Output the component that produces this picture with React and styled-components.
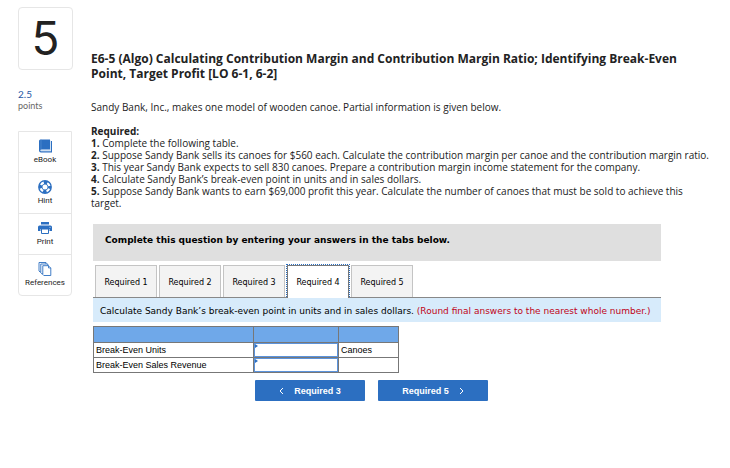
import { useState } from 'react';
import styled, { createGlobalStyle } from 'styled-components';

const GlobalStyle = createGlobalStyle`
  * {
    box-sizing: border-box;
  }
  body {
    margin: 0;
    background: #fff;
    color: #222;
    font-family: 'Open Sans', sans-serif;
  }
`;

const Page = styled.div`
  display: flex;
  align-items: flex-start;
  gap: 18px;
  padding: 7px 18px;
`;

const Sidebar = styled.aside`
  flex: none;
  width: 55px;
`;

const QuestionNumber = styled.div`
  height: 63px;
  border: 1px solid #e6e6e6;
  border-radius: 4px;
  font-family: Inter, sans-serif;
  font-size: 46px;
  font-weight: 400;
  line-height: 60px;
  text-align: center;
`;

const Points = styled.div`
  margin-top: 18px;
  font-family: Lato, sans-serif;
  font-size: 9px;
  line-height: 11px;
  color: #666;
`;

const PointsValue = styled.div`
  font-size: 10px;
  line-height: 12px;
  color: #1f57a4;
`;

const Tools = styled.nav`
  width: 54px;
  margin-top: 20px;
  border: 1px solid #e6e6e6;
  border-radius: 0 0 4px 4px;
`;

const Tool = styled.a`
  display: flex;
  flex-direction: column;
  align-items: center;
  gap: 2px;
  height: 41px;
  padding-top: 7px;
  font-family: Roboto, sans-serif;
  font-size: 8px;
  line-height: 10px;
  color: #222;
  text-decoration: none;

  &:first-child {
    height: 40px;
  }

  & + & {
    border-top: 1px solid #e6e6e6;
  }
`;

const Main = styled.main`
  flex: 1;
  min-width: 0;
  padding-top: 44px;
`;

const Title = styled.h1`
  max-width: 610px;
  margin: 0 0 20px;
  font-size: 12px;
  font-weight: 700;
  line-height: 15px;
`;

const Intro = styled.p`
  margin: 0 0 12px;
  font-size: 10px;
  line-height: 12px;
`;

const Steps = styled.div`
  font-size: 10px;
  line-height: 12px;
`;

const Worksheet = styled.section`
  max-width: 568px;
  margin: 15px 0 0 2px;
  font-family: Verdana, 'DejaVu Sans', sans-serif;
  font-size: 9px;
  line-height: 12px;
  color: #000;
`;

const Banner = styled.div`
  padding: 10px 12px 15px;
  background: #dfdfdf;
  font-weight: 700;
`;

const TabList = styled.div`
  display: flex;
  gap: 2px;
  padding: 4px 2px 0;
  border-bottom: 1px solid #888;
`;

const Tab = styled.button`
  width: 62px;
  height: 32px;
  padding: 2px 0 0;
  border: 1px solid #c4c4c4;
  border-bottom: 0;
  background: #f3f3f3;
  font: inherit;
  font-size: 8px;
  color: #000;
  cursor: pointer;

  &[aria-selected='true'] {
    margin-bottom: -1px;
    height: 33px;
    border-color: #777;
    background: #fff;
    outline: 1px dotted #2c6fc1;
    clip-path: inset(-1px -1px 0);
  }
`;

const Instruction = styled.div`
  padding: 7px 7px 5px;
  background: #d7ebfb;
`;

const Note = styled.span`
  color: #c00418;
`;

const AnswerTable = styled.table`
  width: 305px;
  margin-top: 4px;
  border-collapse: collapse;
  table-layout: fixed;
  font-family: 'Liberation Sans', Arial, sans-serif;
  font-size: 9px;
  line-height: 10px;

  th,
  td {
    height: 15px;
    padding: 0 2px;
    border: 1px solid #777;
    font-weight: 400;
    text-align: left;
  }

  thead th {
    height: 16px;
    background: #6fa8e9;
  }

  td.answer {
    padding: 0;
    background: #fff;
  }
`;

const AnswerField = styled.label`
  position: relative;
  display: block;

  &::before {
    content: '';
    position: absolute;
    top: 1px;
    left: 1px;
    border-top: 2px solid transparent;
    border-bottom: 2px solid transparent;
    border-left: 3px solid #2c6fc1;
  }
`;

const AnswerInput = styled.input`
  display: block;
  width: 100%;
  height: 14px;
  padding: 0 5px;
  border: 1px solid #5b93dc;
  outline: none;
  font: inherit;
  text-align: right;
`;

const Pager = styled.div`
  display: flex;
  gap: 13px;
  padding: 7px 0 0 162px;
`;

const PagerButton = styled.button`
  display: flex;
  align-items: center;
  justify-content: center;
  gap: 10px;
  width: 110px;
  height: 21px;
  padding: 0;
  border: 0;
  border-radius: 1px;
  background: #2c6fc1;
  color: #fff;
  font-family: 'Liberation Sans', Arial, sans-serif;
  font-size: 9px;
  font-weight: 700;
  cursor: pointer;
`;

const BookIcon = () => (
  <svg width="14" height="14" viewBox="0 0 14 14" aria-hidden="true">
    <path d="M2.500 0.500H12v10H3a1 1 0 0 0 0 1.800h10V2h1v11.500H3A2 2 0 0 1 1 11.500V2A1.500 1.500 0 0 1 2.500 0.500z" fill="#2c6fc1" />
    <path d="M3 0.500v10" stroke="#5c92d3" strokeWidth="0.600" />
    <path d="M3 11.500h9.500V1.500" fill="none" stroke="#b9d2ee" strokeWidth="0.700" />
  </svg>
);

const HintIcon = () => (
  <svg width="14" height="14" viewBox="0 0 14 14" aria-hidden="true">
    <circle cx="7" cy="7" r="4.700" fill="none" stroke="#2c6fc1" strokeWidth="4.400" />
    <circle cx="7" cy="7" r="4.500" fill="none" stroke="#fff" strokeWidth="2.200" strokeDasharray="3.530 3.540" strokeDashoffset="-1.770" />
  </svg>
);

const PrintIcon = () => (
  <svg width="14" height="14" viewBox="0 0 14 14" aria-hidden="true">
    <path d="M3 1h8v2.500H3zM1.500 4.500h11A1.500 1.500 0 0 1 14 6v4h-2.500V8h-9v2H0V6a1.500 1.500 0 0 1 1.500-1.500z" fill="#2c6fc1" />
    <path d="M3.500 8h7v4.500h-7z" fill="#fff" stroke="#2c6fc1" />
    <circle cx="12" cy="6.200" r="0.500" fill="#fff" />
  </svg>
);

const ReferencesIcon = () => (
  <svg width="14" height="14" viewBox="0 0 14 14" fill="#fff" stroke="#2c6fc1" strokeWidth="0.900" aria-hidden="true">
    <path d="M1 0.500h7V10H2l-1-1z" />
    <path d="M2.800 2h7v9.800H3.800l-1-1z" />
    <path d="M4.800 3.700h5.700l2.300 2.200v7.600h-7l-1-1z" />
    <path d="M10.500 3.700v2.200h2.300" />
  </svg>
);

const Chevron = ({ next }) => (
  <svg width="5" height="8" viewBox="0 0 5 8" fill="none" stroke="#fff" aria-hidden="true">
    <path d={next ? 'M1 1l3 3-3 3' : 'M4 1L1 4l3 3'} />
  </svg>
);

const tools = [
  { label: 'eBook', Icon: BookIcon },
  { label: 'Hint', Icon: HintIcon },
  { label: 'Print', Icon: PrintIcon },
  { label: 'References', Icon: ReferencesIcon },
];

const steps = [
  'Complete the following table.',
  'Suppose Sandy Bank sells its canoes for $560 each. Calculate the contribution margin per canoe and the contribution margin ratio.',
  'This year Sandy Bank expects to sell 830 canoes. Prepare a contribution margin income statement for the company.',
  'Calculate Sandy Bank’s break-even point in units and in sales dollars.',
  'Suppose Sandy Bank wants to earn $69,000 profit this year. Calculate the number of canoes that must be sold to achieve this target.',
];

const rows = [
  { label: 'Break-Even Units', unit: 'Canoes' },
  { label: 'Break-Even Sales Revenue', unit: '' },
];

export default function App() {
  const [activeTab, setActiveTab] = useState(4);

  return (
    <>
      <GlobalStyle />
      <Page>
        <Sidebar>
          <QuestionNumber>5</QuestionNumber>
          <Points>
            <PointsValue>2.5</PointsValue>
            points
          </Points>
          <Tools>
            {tools.map(({ label, Icon }) => (
              <Tool key={label} href="#">
                <Icon />
                {label}
              </Tool>
            ))}
          </Tools>
        </Sidebar>
        <Main>
          <Title>
            E6-5 (Algo) Calculating Contribution Margin and Contribution Margin Ratio; Identifying Break-Even Point, Target Profit [LO 6-1, 6-2]
          </Title>
          <Intro>Sandy Bank, Inc., makes one model of wooden canoe. Partial information is given below.</Intro>
          <Steps>
            <strong>Required:</strong>
            {steps.map((step, i) => (
              <div key={step}>
                <strong>{i + 1}.</strong> {step}
              </div>
            ))}
          </Steps>
          <Worksheet>
            <Banner>Complete this question by entering your answers in the tabs below.</Banner>
            <TabList role="tablist">
              {[1, 2, 3, 4, 5].map((n) => (
                <Tab key={n} role="tab" aria-selected={n === activeTab} onClick={() => setActiveTab(n)}>
                  Required {n}
                </Tab>
              ))}
            </TabList>
            <Instruction>
              Calculate Sandy Bank’s break-even point in units and in sales dollars.{' '}
              <Note>(Round final answers to the nearest whole number.)</Note>
            </Instruction>
            <AnswerTable>
              <colgroup>
                <col width="160" />
                <col width="85" />
                <col width="60" />
              </colgroup>
              <thead>
                <tr>
                  <th />
                  <th />
                  <th />
                </tr>
              </thead>
              <tbody>
                {rows.map(({ label, unit }) => (
                  <tr key={label}>
                    <th scope="row">{label}</th>
                    <td className="answer">
                      <AnswerField>
                        <AnswerInput type="text" aria-label={label} />
                      </AnswerField>
                    </td>
                    <td>{unit}</td>
                  </tr>
                ))}
              </tbody>
            </AnswerTable>
            <Pager>
              <PagerButton onClick={() => setActiveTab(3)}>
                <Chevron />
                Required 3
              </PagerButton>
              <PagerButton onClick={() => setActiveTab(5)}>
                Required 5
                <Chevron next />
              </PagerButton>
            </Pager>
          </Worksheet>
        </Main>
      </Page>
    </>
  );
}
